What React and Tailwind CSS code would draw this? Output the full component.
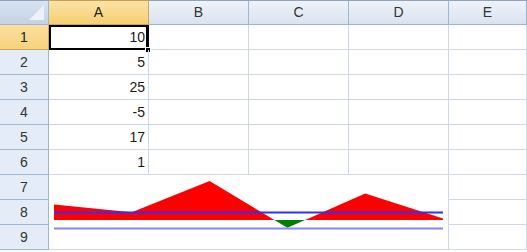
import React from "react";

const cols = ["A", "B", "C", "D", "E"];
const values = [10, 5, 25, -5, 17, 1];

function Corner() {
  return (
    <div className="relative border-t border-t-[#8fa5bd] border-r border-b border-[#9eb6ce] bg-gradient-to-b from-[#d9e3f0] to-[#c3d2e6]">
      <svg className="absolute left-0 top-0" width="48" height="23" viewBox="0 0 48 23">
        <polygon points="44,4 44,19 29,19" fill="#eef2f8" />
      </svg>
    </div>
  );
}

function Chart() {
  const x0 = 5;
  const step = 77.8;
  const base = 45;
  const scale = 1.556;
  const pts = values.map((v, i) => [x0 + i * step, base - v * scale]);
  const poly =
    `${x0},${base} ` +
    pts.map((p) => `${p[0].toFixed(1)},${p[1].toFixed(1)}`).join(" ") +
    ` ${(x0 + 5 * step).toFixed(1)},${base}`;
  return (
    <svg width="399" height="74" viewBox="0 0 399 74" className="block">
      <defs>
        <clipPath id="above">
          <rect x="0" y="0" width="399" height={base} />
        </clipPath>
        <clipPath id="below">
          <rect x="0" y={base} width="399" height={74 - base} />
        </clipPath>
      </defs>
      <polygon points={poly} fill="#ff0000" clipPath="url(#above)" />
      <polygon points={poly} fill="#008000" clipPath="url(#below)" />
      <rect x="5" y="36.5" width="389" height="2" fill="#2f2fff" />
      <rect x="5" y="52.5" width="389" height="2" fill="#8585ff" />
    </svg>
  );
}

export default function App() {
  return (
    <div className="w-[527px] h-[252px] bg-white overflow-hidden font-['Liberation_Sans',Arial,sans-serif] text-[14px] text-[#1a1a1a]">
      <div className="grid grid-cols-[49px_100px_100px_100px_100px_78px] grid-rows-[repeat(10,25px)]">
        <Corner />
        {cols.map((c, i) => (
          <div
            key={c}
            className={
              i === 0
                ? "flex items-center justify-center border-t border-t-[#c9a24f] border-r border-b border-[#c9a764] bg-gradient-to-b from-[#fbe3a7] to-[#f6cf6d] text-[#222]"
                : "flex items-center justify-center border-t border-t-[#8fa5bd] border-r border-b border-[#9eb6ce] bg-gradient-to-b from-[#eef3fa] to-[#d9e3f0] text-[#333]"
            }
          >
            {c}
          </div>
        ))}
        {[1, 2, 3, 4, 5, 6].map((r) => (
          <React.Fragment key={r}>
            <div
              className={
                r === 1
                  ? "flex items-center justify-center border-r border-b border-[#c9a764] bg-gradient-to-b from-[#fbe0a0] to-[#f7d27a] text-[#222]"
                  : "flex items-center justify-center border-r border-b border-[#9eb6ce] bg-[#e4ecf7] text-[#333]"
              }
            >
              {r}
            </div>
            <div className="relative flex items-end justify-end pr-[3px] pb-[5px] border-r border-b border-[#d0d7e5] leading-none">
              {values[r - 1]}
              {r === 1 && (
                <>
                  <div className="absolute left-0 top-0 w-[100px] h-[25px] border-2 border-r-[3px] border-black" />
                  <div className="absolute left-[96px] top-[22px] w-[6px] h-[6px] bg-black border border-white" />
                </>
              )}
            </div>
            <div className="border-r border-b border-[#d0d7e5]" />
            <div className="border-r border-b border-[#d0d7e5]" />
            <div className="border-r border-b border-[#d0d7e5]" />
            <div className="border-r border-b border-[#d0d7e5]" />
          </React.Fragment>
        ))}
        {[7, 8, 9].map((r) => (
          <React.Fragment key={r}>
            <div className="flex items-center justify-center border-r border-b border-[#9eb6ce] bg-[#e4ecf7] text-[#333]">
              {r}
            </div>
            {r === 7 && (
              <div className="col-span-4 row-span-3 border-r border-b border-[#d0d7e5] bg-white">
                <Chart />
              </div>
            )}
            <div className="border-r border-b border-[#d0d7e5]" />
          </React.Fragment>
        ))}
      </div>
    </div>
  );
}
